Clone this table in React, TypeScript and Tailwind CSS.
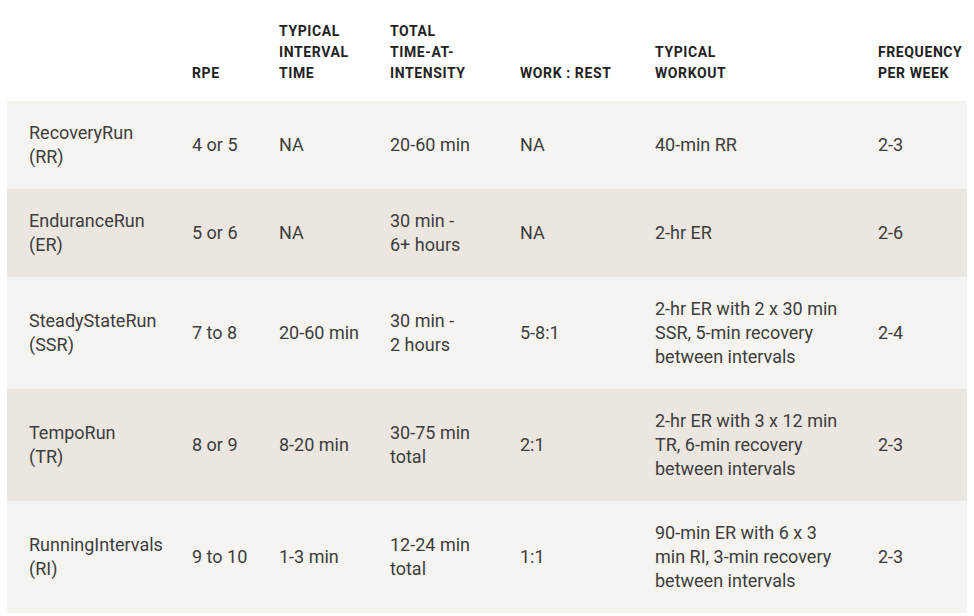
const headers = [
  [],
  ["RPE"],
  ["TYPICAL", "INTERVAL", "TIME"],
  ["TOTAL", "TIME-AT-", "INTENSITY"],
  ["WORK : REST"],
  ["TYPICAL", "WORKOUT"],
  ["FREQUENCY", "PER WEEK"],
]

const rows = [
  {
    tone: "light",
    cells: [
      ["RecoveryRun", "(RR)"],
      ["4 or 5"],
      ["NA"],
      ["20-60 min"],
      ["NA"],
      ["40-min RR"],
      ["2-3"],
    ],
  },
  {
    tone: "dark",
    cells: [
      ["EnduranceRun", "(ER)"],
      ["5 or 6"],
      ["NA"],
      ["30 min -", "6+ hours"],
      ["NA"],
      ["2-hr ER"],
      ["2-6"],
    ],
  },
  {
    tone: "light",
    cells: [
      ["SteadyStateRun", "(SSR)"],
      ["7 to 8"],
      ["20-60 min"],
      ["30 min -", "2 hours"],
      ["5-8:1"],
      ["2-hr ER with 2 x 30 min", "SSR, 5-min recovery", "between intervals"],
      ["2-4"],
    ],
  },
  {
    tone: "dark",
    cells: [
      ["TempoRun", "(TR)"],
      ["8 or 9"],
      ["8-20 min"],
      ["30-75 min", "total"],
      ["2:1"],
      ["2-hr ER with 3 x 12 min", "TR, 6-min recovery", "between intervals"],
      ["2-3"],
    ],
  },
  {
    tone: "light",
    cells: [
      ["RunningIntervals", "(RI)"],
      ["9 to 10"],
      ["1-3 min"],
      ["12-24 min", "total"],
      ["1:1"],
      ["90-min ER with 6 x 3", "min RI, 3-min recovery", "between intervals"],
      ["2-3"],
    ],
  },
]

const cols = "grid grid-cols-[163px_87px_111px_130px_135px_223px_1fr] pl-[22px]"

export default function App() {
  return (
    <div
      className="min-h-screen w-[974px] bg-white px-[7px]"
      style={{ fontFamily: "Roboto, 'Noto Sans', sans-serif" }}
    >
      {/* Header */}
      <div className={`${cols} h-[101px] items-end pb-[17px]`}>
        {headers.map((lines, i) => (
          <div
            key={i}
            className="text-[14px] font-bold leading-[21px] tracking-[0.6px] text-[#222222] whitespace-nowrap"
          >
            {lines.map((l) => (
              <div key={l}>{l}</div>
            ))}
          </div>
        ))}
      </div>

      {/* Rows */}
      {rows.map((row, r) => (
        <div
          key={r}
          className={`${cols} items-center py-[20px] ${
            row.tone === "light" ? "bg-[#f6f4f0]" : "bg-[#ebe6e0]"
          }`}
        >
          {row.cells.map((lines, i) => (
            <div
              key={i}
              className="text-[18px] leading-[24px] text-[#3d3d3d] whitespace-nowrap"
            >
              {lines.map((l) => (
                <div key={l}>{l}</div>
              ))}
            </div>
          ))}
        </div>
      ))}
    </div>
  )
}
